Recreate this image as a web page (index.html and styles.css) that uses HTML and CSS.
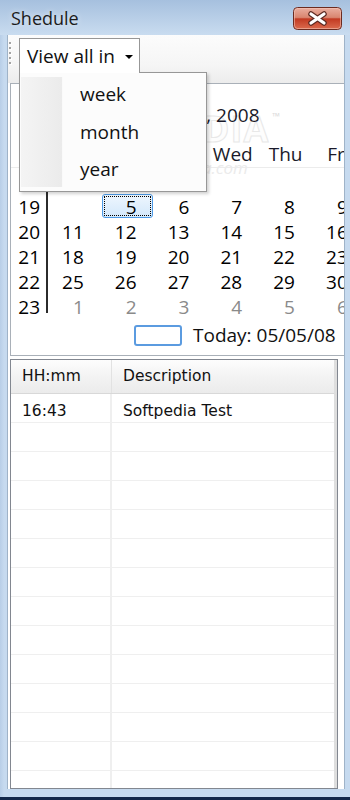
FILE: index.html
```html
<!DOCTYPE html>
<html>
<head>
	<meta charset="utf-8">
	<link rel="stylesheet" href="styles.css">
</head>
<body>
	<div class="window">
		<div class="titlebar">
			<span class="title">Shedule</span>
			<div class="close-btn">
				<svg width="49" height="23" viewBox="0 0 49 23">
					<defs>
						<linearGradient id="closeGrad" x1="0" y1="0" x2="0" y2="1">
							<stop offset="0" stop-color="#eab0a2"/>
							<stop offset="0.45" stop-color="#d98670"/>
							<stop offset="0.52" stop-color="#c23a22"/>
							<stop offset="1" stop-color="#dc6d50"/>
						</linearGradient>
					</defs>
					<rect x="0.5" y="0.5" width="48" height="22" rx="4" fill="url(#closeGrad)" stroke="#6b2b20"/>
					<rect x="1.5" y="1.5" width="46" height="20" rx="3" fill="none" stroke="#f6c8bc" stroke-opacity="0.55"/>
					<path d="M18 7 L31 16 M31 7 L18 16" stroke="#5b2a22" stroke-width="5.5" stroke-linecap="round"/>
					<path d="M18 7 L31 16 M31 7 L18 16" stroke="#ffffff" stroke-width="3.2" stroke-linecap="round"/>
				</svg>
			</div>
		</div>
		<div class="frame">
			<div class="client">
				<div class="toolbar">
					<div class="grip">
						<span></span><span></span><span></span><span></span><span></span>
					</div>
					<div class="dropdown-btn">View all in<span class="caret"></span></div>
					<!-- opened drop down -->
					<div class="menu">
						<div class="menu-item">week</div>
						<div class="menu-item">month</div>
						<div class="menu-item">year</div>
					</div>
				</div>

				<div class="calendar">
					<div class="watermark">SOFTPEDIA<span class="tm">™</span></div>
					<div class="watermark-url">www.softpedia.com</div>
					<div class="cal-inner">
						<div class="cal-title">May, 2008</div>
						<div class="cal-head">
							<span></span>
							<span>Sun</span><span>Mon</span><span>Tue</span><span>Wed</span><span>Thu</span><span>Fri</span><span>Sat</span>
						</div>
						<div class="cal-body">
							<div class="weeks">
								<div>19</div><div>20</div><div>21</div><div>22</div><div>23</div>
							</div>
							<div class="days">
								<span></span><span class="sel">5</span><span>6</span><span>7</span><span>8</span><span>9</span><span>10</span>
								<span>11</span><span>12</span><span>13</span><span>14</span><span>15</span><span>16</span><span>17</span>
								<span>18</span><span>19</span><span>20</span><span>21</span><span>22</span><span>23</span><span>24</span>
								<span>25</span><span>26</span><span>27</span><span>28</span><span>29</span><span>30</span><span>31</span>
								<span class="other">1</span><span class="other">2</span><span class="other">3</span><span class="other">4</span><span class="other">5</span><span class="other">6</span><span class="other">7</span>
							</div>
						</div>
						<div class="today">
							<span class="today-box"></span>
							<span class="today-text">Today: 05/05/08</span>
						</div>
					</div>
				</div>

				<div class="list">
					<div class="list-inner">
						<div class="list-head">
							<div class="col-time">HH:mm</div>
							<div class="col-desc">Description</div>
						</div>
						<div class="row"><div class="col-time">16:43</div><div class="col-desc">Softpedia Test</div></div>
						<div class="row"><div class="col-time"></div><div class="col-desc"></div></div>
						<div class="row"><div class="col-time"></div><div class="col-desc"></div></div>
						<div class="row"><div class="col-time"></div><div class="col-desc"></div></div>
						<div class="row"><div class="col-time"></div><div class="col-desc"></div></div>
						<div class="row"><div class="col-time"></div><div class="col-desc"></div></div>
						<div class="row"><div class="col-time"></div><div class="col-desc"></div></div>
						<div class="row"><div class="col-time"></div><div class="col-desc"></div></div>
						<div class="row"><div class="col-time"></div><div class="col-desc"></div></div>
						<div class="row"><div class="col-time"></div><div class="col-desc"></div></div>
						<div class="row"><div class="col-time"></div><div class="col-desc"></div></div>
						<div class="row"><div class="col-time"></div><div class="col-desc"></div></div>
						<div class="row"><div class="col-time"></div><div class="col-desc"></div></div>
						<div class="row"><div class="col-time"></div><div class="col-desc"></div></div>
					</div>
				</div>
			</div>
		</div>
	</div>
</body>
</html>
```

FILE: styles.css
```css
html, body {
	margin: 0;
	padding: 0;
	width: 100%;
	height: 100%;
	overflow: hidden;
}
body {
	font-family: "Open Sans", "Noto Sans", sans-serif;
	color: #000;
	background-color: #13284a;
}

.window {
	display: flex;
	flex-direction: column;
	width: 350px;
	height: 800px;
	box-sizing: border-box;
	border-bottom: 3px solid #13284a;
}

/* title bar */
.titlebar {
	height: 35px;
	flex-shrink: 0;
	display: flex;
	align-items: center;
	justify-content: space-between;
	padding: 0 8px 0 11px;
	box-sizing: border-box;
	background: linear-gradient(#a6c0de, #c9dcf0);
}
.title {
	font-size: 18px;
	color: #1b1b1b;
	text-shadow: 0 0 6px rgba(255, 255, 255, 0.7);
}
.close-btn {
	height: 23px;
	margin-top: 1px;
}
.close-btn svg {
	display: block;
}

.frame {
	flex: 1;
	display: flex;
	min-height: 0;
	padding: 0 5px 8px 7px;
	background: linear-gradient(to right, #b8cee7, #c6daef 4px, #c6daef);
}
.client {
	flex: 1;
	display: flex;
	flex-direction: column;
	min-width: 0;
	min-height: 0;
	overflow: hidden;
	background-color: #fff;
	border-left: 1px solid #9fb3c8;
	border-right: 1px solid #9fb3c8;
}

/* tool strip */
.toolbar {
	position: relative;
	z-index: 2;
	height: 48px;
	flex-shrink: 0;
	display: flex;
	align-items: flex-start;
	background: linear-gradient(#fcfcfc, #f5f5f5 65%, #ececec);
}
.grip {
	display: flex;
	flex-direction: column;
	gap: 3px;
	margin: 7px 0 0 1px;
}
.grip span {
	width: 2px;
	height: 2px;
	background-color: #a3a3a3;
	box-shadow: 1px 1px 0 #fff;
}
.dropdown-btn {
	position: relative;
	z-index: 3;
	display: flex;
	align-items: center;
	height: 35px;
	margin: 3px 0 0 8px;
	padding: 0 6px 0 7px;
	box-sizing: border-box;
	border: 1px solid #979797;
	border-bottom: none;
	background-color: #fff;
	font-size: 19px;
	line-height: 33px;
	color: #111;
}
.caret {
	width: 0;
	height: 0;
	margin: 2px 0 0 10px;
	border-left: 4px solid transparent;
	border-right: 4px solid transparent;
	border-top: 4px solid #000;
}
.menu {
	position: absolute;
	z-index: 2;
	left: 11px;
	top: 37px;
	width: 188px;
	height: 120px;
	box-sizing: border-box;
	padding-top: 3px;
	border: 1px solid #979797;
	background-color: #fcfcfc;
	box-shadow: 2px 2px 3px rgba(0, 0, 0, 0.18);
}
.menu::before {
	content: '';
	position: absolute;
	left: 1px;
	top: 4px;
	bottom: 4px;
	width: 41px;
	background: linear-gradient(to right, #f4f4f4, #ebebeb);
	border-right: 1px solid #fafafa;
}
.menu-item {
	position: relative;
	height: 37.5px;
	line-height: 37.5px;
	padding-left: 60px;
	font-size: 19px;
	color: #111;
}

/* month calendar */
.calendar {
	position: relative;
	height: 273px;
	flex-shrink: 0;
	margin-left: 2px;
	box-sizing: border-box;
	border: 1px solid #a9b0b8;
	border-right: none;
	overflow: hidden;
	background-color: #fff;
}
.watermark {
	position: absolute;
	left: 54px;
	top: 20px;
	font-size: 36px;
	font-weight: bold;
	letter-spacing: 1px;
	color: #fdfdfd;
	-webkit-text-stroke: 1px #e8e8e8;
}
.watermark .tm {
	font-size: 10px;
	vertical-align: 22px;
	-webkit-text-stroke: 0;
	color: #dcdcdc;
	margin-left: 3px;
}
.watermark-url {
	position: absolute;
	left: 90px;
	top: 72px;
	font-size: 17px;
	font-style: italic;
	color: #ebebeb;
}
.cal-inner {
	position: relative;
	width: 406.6px;
	font-size: 19px;
}
.cal-title {
	padding-top: 17px;
	line-height: 28px;
	text-align: center;
	color: #1a1a2a;
}
.cal-head {
	display: grid;
	grid-template-columns: 37px repeat(7, 52.8px);
	height: 25px;
	line-height: 25px;
	margin-top: 13px;
	text-align: center;
	color: #1a1a2a;
	border-bottom: 1px solid #ececec;
}
.cal-body {
	display: flex;
	margin-top: 27px;
	line-height: 25px;
}
.weeks {
	width: 37px;
	height: 121px;
	margin-top: -3px;
	padding: 3px 6px 0 0;
	box-sizing: border-box;
	border-right: 2px solid #2b2b2b;
	text-align: right;
}
.days {
	display: grid;
	grid-template-columns: repeat(7, 52.8px);
	grid-auto-rows: 25px;
	text-align: right;
}
.days span {
	padding-right: 17px;
}
.days .other {
	color: #8a8a8a;
}
.days .sel {
	position: relative;
	margin: -1px 1px 2px 1px;
	padding-right: 15px;
	line-height: 24px;
	border: 1px solid #4f9be6;
	border-radius: 3px;
	background: linear-gradient(#eef6fe, #d3e8fb);
}
.days .sel::after {
	content: '';
	position: absolute;
	left: 1px;
	top: 1px;
	right: 1px;
	bottom: 1px;
	border: 1px dotted #000;
}
.today {
	display: flex;
	align-items: center;
	height: 22px;
	margin-top: 4px;
	padding-left: 123px;
}
.today-box {
	width: 48px;
	height: 21px;
	box-sizing: border-box;
	border: 2px solid #5b9be0;
	border-radius: 3px;
}
.today-text {
	margin-left: 11px;
	color: #111;
}

/* appointment list */
.list {
	flex: 1;
	display: flex;
	min-height: 0;
	margin: 3px 6px 0 2px;
	border: 1px solid #828790;
}
.list-inner {
	flex: 1;
	min-width: 0;
	overflow: hidden;
	border-right: 3px solid #dedede;
	font-family: "DejaVu Sans", sans-serif;
	font-size: 15.5px;
	color: #111;
}
.list-head {
	display: flex;
	height: 34px;
	box-sizing: border-box;
	line-height: 33px;
	border-bottom: 1px solid #d8d8d8;
	background: linear-gradient(#fdfdfd, #f3f3f3 50%, #ebebeb);
}
.col-time {
	width: 101px;
	flex-shrink: 0;
	padding-left: 11px;
	box-sizing: border-box;
	border-right: 1px solid #e2e2e2;
}
.col-desc {
	flex: 1;
	padding-left: 11px;
}
.row {
	display: flex;
	height: 29px;
	box-sizing: border-box;
	border-bottom: 1px solid #efefef;
	line-height: 20px;
}
.row .col-time,
.row .col-desc {
	padding-top: 7px;
}
.row .col-time {
	border-right: 2px solid #efefef;
}
```
